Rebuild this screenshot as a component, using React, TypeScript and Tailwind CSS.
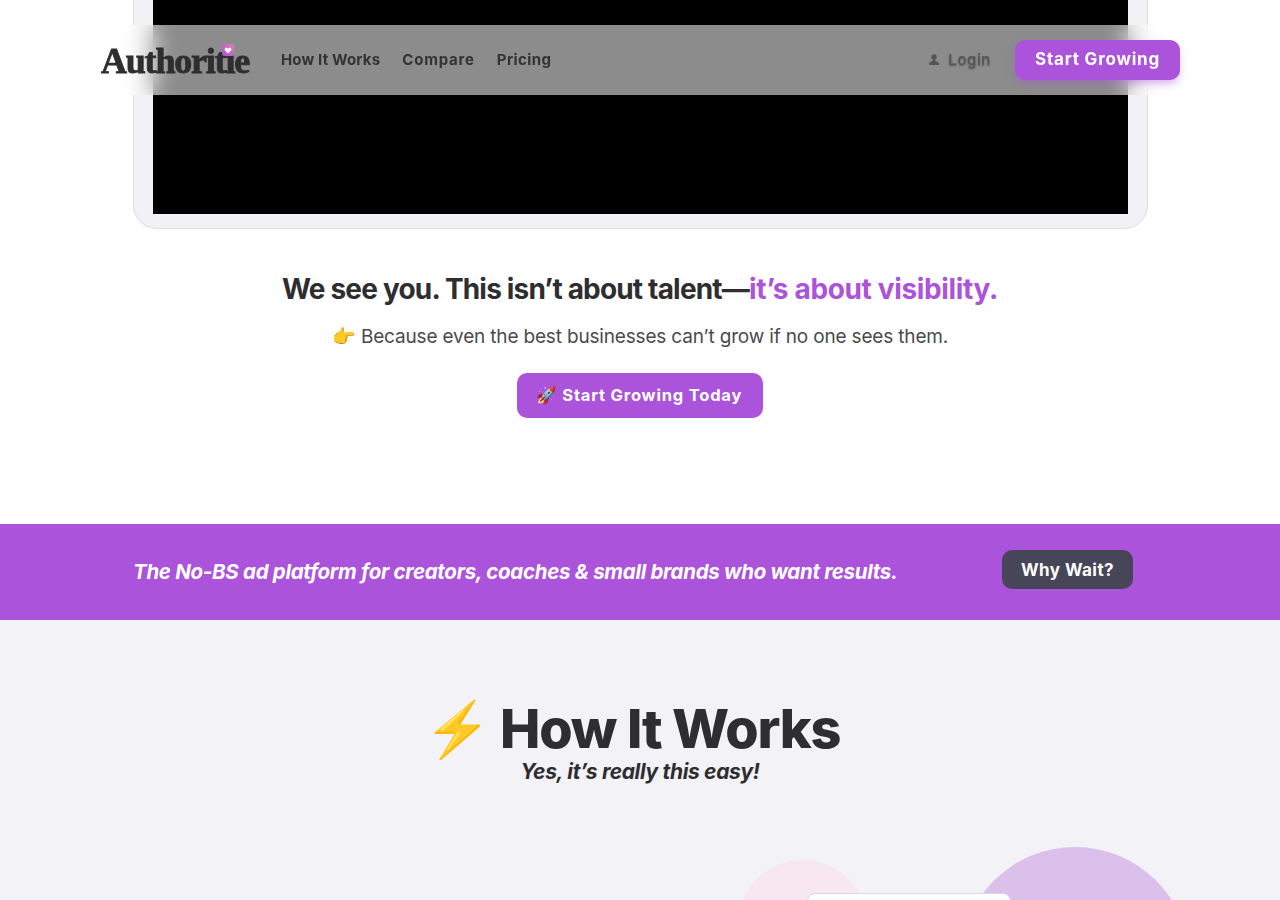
import React from "react";

const sans = "font-['Inter','Noto_Sans',sans-serif]";

function PersonIcon() {
  return (
    <svg className="h-3 w-3" viewBox="0 0 12 12" fill="currentColor">
      <circle cx="6" cy="3" r="2.7" />
      <path d="M4.6 5.4h2.8v1.5c1.7.5 3.6 1.1 3.6 2.6V11H1V9.500c0-1.500 1.900-2.100 3.600-2.600z" />
    </svg>
  );
}

function NavBar() {
  return (
    <nav className="absolute left-0 right-0 top-[25px] z-10 flex h-[70px] items-center bg-white/55 pl-[101px] pr-[100px] backdrop-blur-[12px]">
      <div className="relative mr-[31px] w-[149px]">
        <span className="block whitespace-nowrap pt-[1px] font-['Liberation_Serif',serif] text-[36px] font-bold leading-none tracking-[-1.2px] text-[#2e2e30] [-webkit-text-stroke:0.8px_#2e2e30]">
          Authoritie
        </span>
        <svg className="absolute left-[121px] top-[2px] h-3 w-3 blur-[0.4px]" viewBox="0 0 12 12">
          <defs>
            <linearGradient id="heartBg" x1="0" y1="1" x2="1" y2="0">
              <stop offset="0" stopColor="#a94fd6" />
              <stop offset="1" stopColor="#e67fb4" />
            </linearGradient>
          </defs>
          <rect width="12" height="12" rx="3" fill="url(#heartBg)" />
          <path d="M6 9.500 3 6.500a1.700 1.700 0 0 1 2.500-2.300l.5.500.5-.5A1.700 1.700 0 0 1 9 6.500z" fill="#fff" />
        </svg>
      </div>
      <div className="flex items-center gap-[22px] text-[15px] font-bold text-[#333336]">
        <a className="tracking-[0.15px]">How It Works</a>
        <a className="tracking-[0.8px]">Compare</a>
        <a className="tracking-[0.4px]">Pricing</a>
      </div>
      <div className="ml-auto flex items-center">
        <a className="mr-[24px] flex items-center gap-[8px] text-[15px] font-medium tracking-[0.6px] text-[#555558] [text-shadow:0_1px_2px_rgba(0,0,0,0.4)]">
          <PersonIcon />
          Login
        </a>
        <button className="flex h-10 w-[165px] items-center justify-center rounded-[10px] bg-[#ab53db] text-[17px] font-bold tracking-[0.8px] text-white shadow-[0_5px_10px_-2px_rgba(171,83,219,0.5)]">
          Start Growing
        </button>
      </div>
    </nav>
  );
}

function Hero() {
  return (
    <section className="flex h-[524px] flex-col items-center bg-white">
      <div className="w-[1015px] rounded-b-[24px] border-x border-b border-[#dededf] bg-[#f2f2f6] px-[19px] pb-[14px]">
        <div className="h-[214px] bg-black" />
      </div>
      <h2 className="mt-[41px] text-[28px] font-bold leading-[38px] tracking-[-0.82px] text-[#2e2e30]">
        We see you. This isn’t about talent—<span className="tracking-[-0.35px] text-[#ab53db]">it’s about visibility.</span>
      </h2>
      <p className="mt-[14px] text-[19px] leading-[30px] tracking-[-0.17px] text-[#4a4a4d]">
        👉 Because even the best businesses can’t grow if no one sees them.
      </p>
      <button className="mt-[21px] flex h-[45px] w-[246px] items-center justify-center rounded-[10px] bg-[#ab53db] pr-[2px] text-[16.5px] font-bold tracking-[0.8px] text-white">
        🚀 Start Growing Today
      </button>
    </section>
  );
}

function Banner() {
  return (
    <section className="flex h-[96px] items-center justify-between bg-[#ab53db] pl-[133px] pr-[147px]">
      <p className="text-[20.5px] font-bold italic tracking-[-0.3px] text-white">
        The No-BS ad platform for creators, coaches &amp; small brands who want results.
      </p>
      <button className="mb-[5px] flex h-[39px] w-[131px] items-center justify-center rounded-[10px] bg-[#474658] pt-[2px] text-[17px] font-bold tracking-[0.45px] text-white">
        Why Wait?
      </button>
    </section>
  );
}

function HowItWorks() {
  return (
    <section className="relative h-[280px] overflow-hidden bg-[#f2f2f7]">
      <div className="flex flex-col items-center pt-[76px]">
        <h2 className="mr-[16px] text-[54px] font-extrabold leading-[66px] tracking-[-1.2px] text-[#2e2e30]">⚡ How It Works</h2>
        <p className="mt-[-5px] text-[21px] font-bold italic leading-[30px] tracking-[-0.33px] text-[#2e2e30]">Yes, it’s really this easy!</p>
      </div>
      <div className="absolute left-[738px] top-[240px] h-[130px] w-[130px] rounded-full bg-[#f8e6f1]" />
      <div className="absolute left-[960px] top-[227px] h-[230px] w-[230px] rounded-full bg-[#dbc0ec]" />
      <div className="absolute left-[807px] top-[273px] h-[100px] w-[204px] rounded-[8px] border border-[#dcd6e0] bg-white" />
    </section>
  );
}

export default function App() {
  return (
    <div className={`relative h-[900px] overflow-hidden ${sans}`}>
      <NavBar />
      <Hero />
      <Banner />
      <HowItWorks />
    </div>
  );
}
